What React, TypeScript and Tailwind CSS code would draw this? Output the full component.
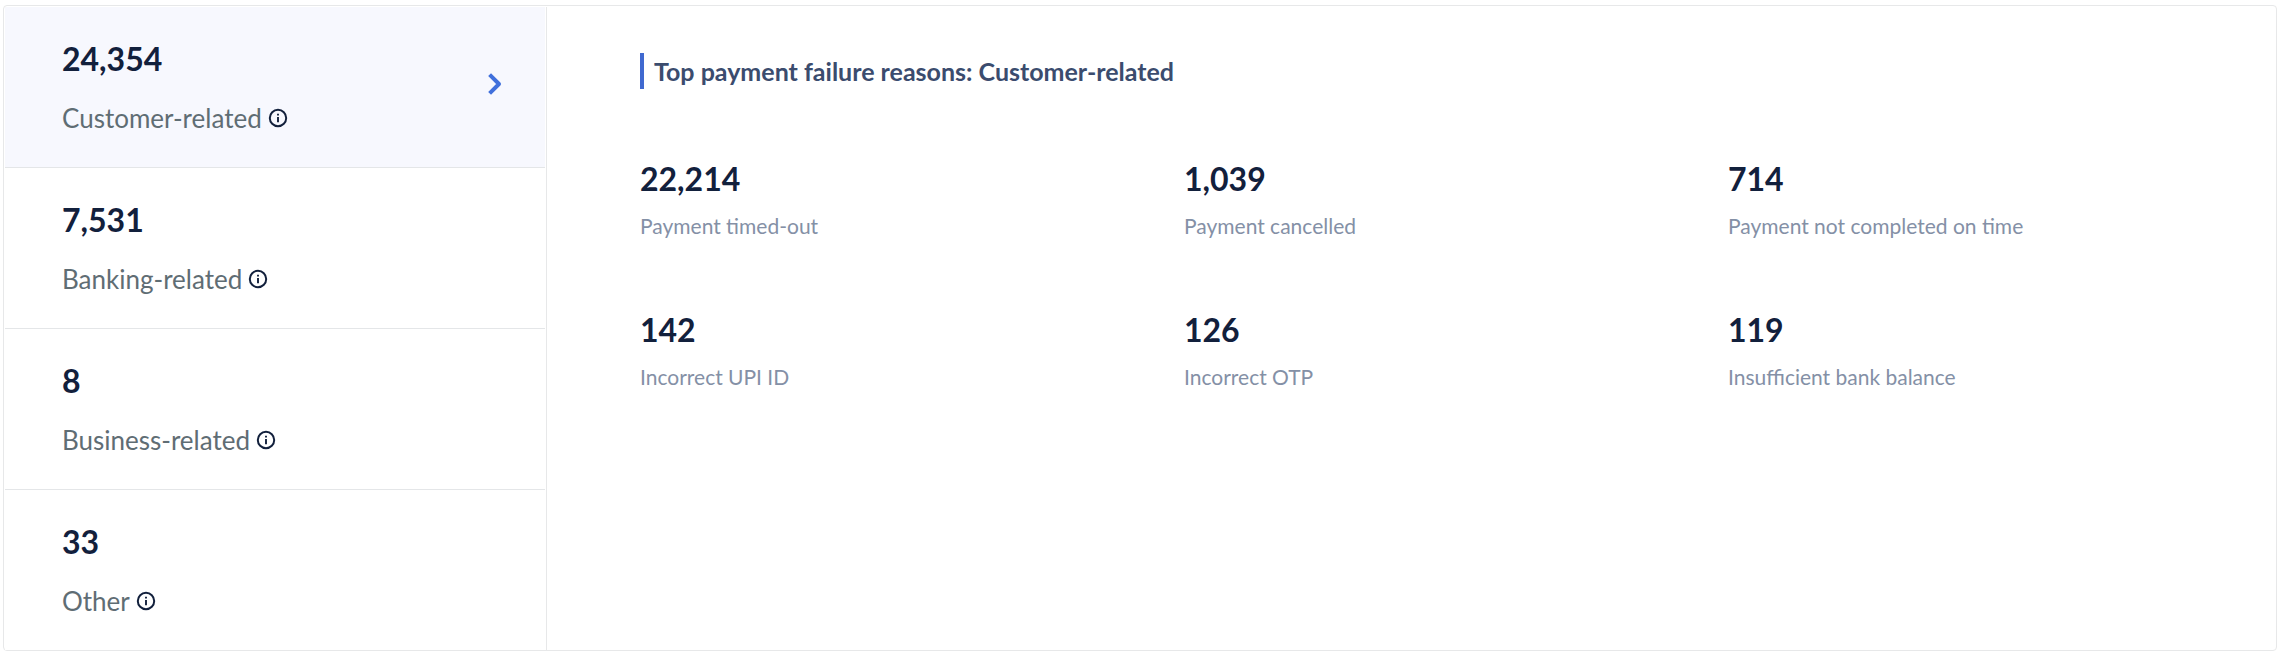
import { useState } from "react";

type Reason = { value: string; label: string };

const categories: Reason[] = [
  { value: "24,354", label: "Customer-related" },
  { value: "7,531", label: "Banking-related" },
  { value: "8", label: "Business-related" },
  { value: "33", label: "Other" },
];

const reasons: Reason[] = [
  { value: "22,214", label: "Payment timed-out" },
  { value: "1,039", label: "Payment cancelled" },
  { value: "714", label: "Payment not completed on time" },
  { value: "142", label: "Incorrect UPI ID" },
  { value: "126", label: "Incorrect OTP" },
  { value: "119", label: "Insufficient bank balance" },
];

function InfoIcon() {
  return (
    <svg className="size-5" viewBox="0 0 20 20" fill="none" stroke="#12203c" aria-hidden="true">
      <circle cx="10" cy="10" r="8.2" strokeWidth="2" />
      <path d="M10 9v5.2" strokeWidth="1.9" />
      <path d="M10 5.7v1.9" strokeWidth="1.9" />
    </svg>
  );
}

function ChevronIcon() {
  return (
    <svg className="mb-1.5 h-6 w-4" viewBox="0 0 16 24" fill="none" stroke="#4070dc" strokeWidth="4" strokeLinejoin="round" aria-hidden="true">
      <path d="M2.6 2.6 12 12l-9.4 9.4" />
    </svg>
  );
}

export default function App() {
  const [selected, setSelected] = useState(0);

  return (
    <main className="bg-white pt-[5px] pr-[5px] pb-[7px] pl-[3px] font-['Lato',sans-serif]">
      <div className="flex rounded-[4px] border border-[#e7e8e9] px-px pt-px">
        <nav className="w-[542px] shrink-0 border-r border-[#e7e8e9] pr-px">
          {categories.map((item, i) => (
            <button
              key={item.label}
              type="button"
              aria-pressed={i === selected}
              onClick={() => setSelected(i)}
              className={
                "flex w-full items-center justify-between border-[#e4e6e8] pt-8 pr-[42px] pb-[33px] pl-[57px] text-left not-last:border-b " +
                (i === selected ? "bg-[#f7f8fe]" : "bg-white")
              }
            >
              <span className="flex flex-col gap-[23px]">
                <span className="text-[32px] leading-10 font-bold text-[#12203c]">{item.value}</span>
                <span className="flex items-center gap-1.5 text-[26px] leading-8 text-[#5f6d74]">
                  {item.label}
                  <InfoIcon />
                </span>
              </span>
              {i === selected && <ChevronIcon />}
            </button>
          ))}
        </nav>

        <section className="grow pt-[46px] pr-[3px] pl-[93px]">
          <h2 className="border-l-4 border-[#4069d0] pl-[10px] text-[25px] leading-9 font-bold text-[#3b4c6e]">
            Top payment failure reasons: {categories[selected].label}
          </h2>
          <dl className="mt-[70px] grid grid-cols-3 gap-y-[70px]">
            {reasons.map((item) => (
              <div key={item.label} className="flex flex-col-reverse gap-[13px]">
                <dt className="text-[21px] leading-7 text-[#8490a6]">{item.label}</dt>
                <dd className="text-[32px] leading-10 font-bold text-[#12203c]">{item.value}</dd>
              </div>
            ))}
          </dl>
        </section>
      </div>
    </main>
  );
}
